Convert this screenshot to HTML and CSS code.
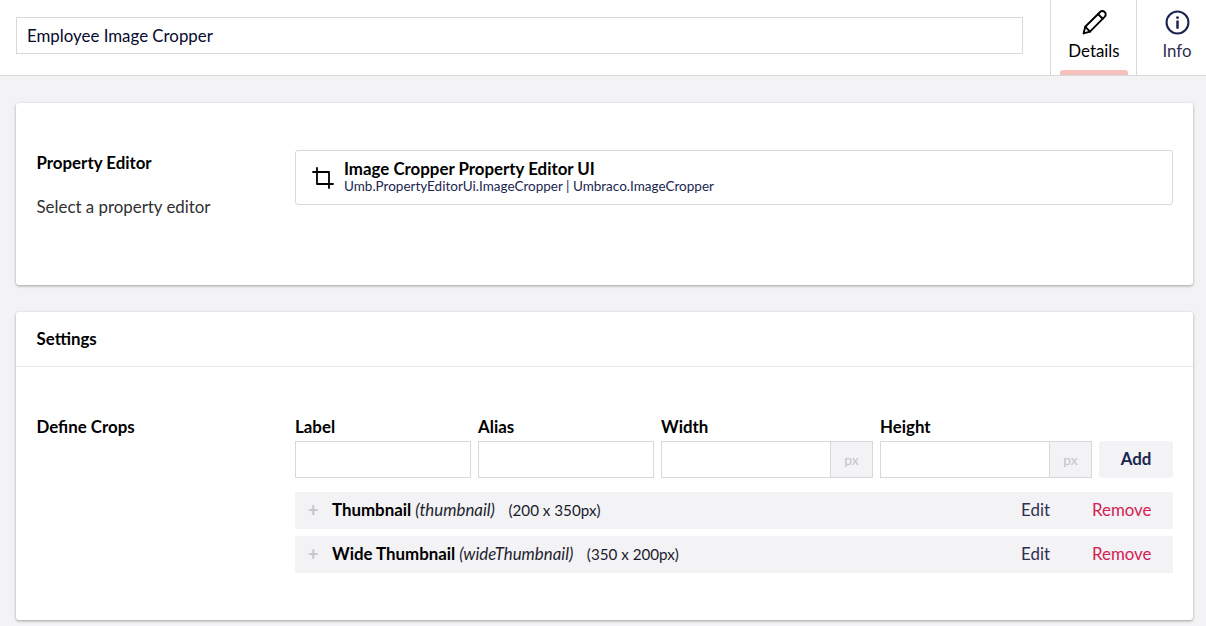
FILE: index.html
```html
<!DOCTYPE html>
<html lang="en">
<head>
    <meta charset="UTF-8">
    <title>Employee Image Cropper</title>
    <link rel="stylesheet" href="styles.css">
</head>
<body>
    <header class="top-bar">
        <div class="name-wrap">
            <input class="name-input" type="text" value="Employee Image Cropper">
        </div>
        <nav class="tabs">
            <a class="tab tab-details active" href="#">
                <svg class="tab-icon" viewBox="0 0 24 24" fill="none" stroke="currentColor" stroke-width="1.8" stroke-linecap="round" stroke-linejoin="round">
                    <path d="M1.5 22.5l1.6-6.4L17.4 1.9a2.9 2.9 0 0 1 4.3 0.1 2.9 2.9 0 0 1 0.2 4.3L7.7 20.8z"/>
                    <path d="M15.4 3.9l4.5 4.5"/>
                    <path d="M3.1 16.1l4.6 4.7"/>
                </svg>
                <span>Details</span>
            </a>
            <a class="tab tab-info" href="#">
                <svg class="tab-icon" viewBox="0 0 24 24" fill="none" stroke="currentColor" stroke-width="2" stroke-linecap="round">
                    <circle cx="12" cy="12" r="10.5"/>
                    <path d="M12 11v6" stroke-width="2.4"/>
                    <path d="M12 7.2v.2" stroke-width="2.6"/>
                </svg>
                <span>Info</span>
            </a>
        </nav>
    </header>

    <main class="content">
        <section class="card card-editor">
            <div class="field-label">
                <h4>Property Editor</h4>
                <p>Select a property editor</p>
            </div>
            <div class="editor-box">
                <svg class="crop-icon" viewBox="0 0 24 24" fill="none" stroke="currentColor" stroke-width="1.8" stroke-linecap="round" stroke-linejoin="round">
                    <path d="M6 2v16h16"/>
                    <path d="M2 6h16v16"/>
                </svg>
                <div class="editor-text">
                    <strong>Image Cropper Property Editor UI</strong>
                    <small>Umb.PropertyEditorUi.ImageCropper | Umbraco.ImageCropper</small>
                </div>
            </div>
        </section>

        <section class="card card-settings">
            <div class="card-head">Settings</div>
            <div class="card-body">
                <h4 class="crops-title">Define Crops</h4>
                <div class="crops">
                    <form class="crop-form">
                        <label class="crop-field">Label<input type="text"></label>
                        <label class="crop-field">Alias<input type="text"></label>
                        <label class="crop-field">Width
                            <span class="with-unit"><input type="text"><span class="unit">px</span></span>
                        </label>
                        <label class="crop-field">Height
                            <span class="with-unit"><input type="text"><span class="unit">px</span></span>
                        </label>
                        <button class="add-btn" type="button">Add</button>
                    </form>
                    <ul class="crop-list">
                        <li class="crop-row">
                            <span class="plus">+</span>
                            <b>Thumbnail</b>
                            <i>(thumbnail)</i>
                            <span class="size">(200 x 350px)</span>
                            <a class="edit" href="#">Edit</a>
                            <a class="remove" href="#">Remove</a>
                        </li>
                        <li class="crop-row">
                            <span class="plus">+</span>
                            <b>Wide Thumbnail</b>
                            <i>(wideThumbnail)</i>
                            <span class="size">(350 x 200px)</span>
                            <a class="edit" href="#">Edit</a>
                            <a class="remove" href="#">Remove</a>
                        </li>
                    </ul>
                </div>
            </div>
        </section>
    </main>
</body>
</html>
```

FILE: styles.css
```css
* {
    box-sizing: border-box;
}

html, body {
    height: 626px;
    overflow: hidden;
}

body {
    font-family: Lato, "Open Sans", sans-serif;
    font-size: 16.875px;
    margin: 0;
    background-color: #f3f3f5;
    color: #000;
}

h4, p, ul {
    margin: 0;
    padding: 0;
}

a {
    text-decoration: none;
}

.top-bar {
    display: flex;
    height: 76px;
    background-color: #fff;
    border-bottom: 1px solid #d8d7d9;
}

.name-wrap {
    flex: 1;
    padding: 17px 27px 0 16px;
}

.name-input {
    display: block;
    width: 100%;
    height: 37px;
    padding: 0 10px;
    font-family: inherit;
    font-size: 16.875px;
    color: #060b2e;
    border: 1px solid #d8d7d9;
    outline: none;
}

.tabs {
    display: flex;
}

.tab {
    position: relative;
    display: flex;
    flex-direction: column;
    align-items: center;
    padding-top: 10px;
    line-height: 20px;
    color: #303033;
    border-left: 1px solid #d8d7d9;
}

.tab-details {
    width: 86px;
    padding-left: 1px;
    color: #000;
}

.tab-info {
    width: 70px;
    padding-left: 11px;
    color: #303050;
}

.tab-icon {
    display: block;
    width: 25px;
    height: 25px;
    margin-bottom: 6px;
}

.tab-info .tab-icon {
    color: #1b264f;
}

.tab.active::after {
    content: "";
    position: absolute;
    left: 9px;
    bottom: 0;
    width: 68px;
    height: 5px;
    background-color: #f5c1bc;
    border-radius: 3px 3px 0 0;
}

.content {
    padding: 27px 13px 0 16px;
}

.card {
    background-color: #fff;
    border-radius: 3px;
    box-shadow: 0 1px 3px rgba(0, 0, 0, 0.35);
}

.card-editor {
    display: flex;
    height: 182px;
    padding: 47px 20px 0 20.5px;
    margin-bottom: 27px;
}

.field-label {
    width: 258.5px;
    flex: none;
}

h4 {
    font-size: 16.875px;
    font-weight: 700;
    line-height: 20px;
    margin-top: 3px;
}

.field-label p {
    margin-top: 24px;
    line-height: 20px;
    color: #303033;
}

.editor-box {
    flex: 1;
    display: flex;
    align-items: center;
    height: 55px;
    padding: 0 0 2px 15px;
    border: 1px solid #d8d7d9;
    border-radius: 3px;
}

.crop-icon {
    width: 24px;
    height: 24px;
    margin: 3px 9px 0 0;
    flex: none;
}

.editor-text strong {
    display: block;
    line-height: 18px;
    font-weight: 700;
}

.editor-text small {
    display: block;
    font-size: 13.5px;
    line-height: 16px;
    color: #1b264f;
}

.card-settings {
    height: 308px;
}

.card-head {
    height: 55px;
    padding: 17px 20.5px 0;
    font-weight: 700;
    line-height: 20px;
    border-bottom: 1px solid #e9e9eb;
}

.card-body {
    display: flex;
    padding: 47px 20px 0 20.5px;
}

.crops-title {
    width: 258.5px;
    flex: none;
    margin-top: 3px;
}

.crops {
    flex: 1;
    min-width: 0;
    padding-top: 3px;
}

.crop-form {
    display: flex;
    align-items: flex-end;
    gap: 7px;
}

.crop-field {
    display: block;
    font-weight: 700;
    line-height: 20px;
    width: 176px;
    flex: none;
}

.crop-field:nth-child(3),
.crop-field:nth-child(4) {
    width: 212px;
}

.crop-field input {
    display: block;
    width: 100%;
    height: 37px;
    margin-top: 4px;
    border: 1px solid #d8d7d9;
    outline: none;
}

.with-unit {
    display: flex;
}

.with-unit input {
    flex: 1;
    min-width: 0;
    border-right: none;
}

.unit {
    width: 43px;
    height: 37px;
    margin-top: 4px;
    font-size: 14px;
    font-weight: 400;
    line-height: 35px;
    text-align: center;
    color: #c4c4c8;
    background-color: #f3f3f5;
    border: 1px solid #d8d7d9;
}

.add-btn {
    flex: 1;
    height: 37px;
    padding-bottom: 3px;
    font-family: inherit;
    font-size: 16.875px;
    font-weight: 700;
    color: #1b264f;
    background-color: #f3f3f5;
    border: none;
    border-radius: 3px;
}

.crop-list {
    list-style: none;
    margin-top: 14px;
}

.crop-row {
    display: flex;
    align-items: center;
    height: 37px;
    margin-bottom: 7px;
    padding: 0 21.5px 2px 13px;
    color: #000;
    background-color: #f3f3f5;
}

.plus {
    width: 24px;
    font-size: 18px;
    font-weight: 700;
    color: #c4c4c8;
}

.crop-row b {
    font-weight: 700;
    margin-right: 4px;
}

.crop-row i {
    color: #1f1f2e;
    margin-right: 13.5px;
}

.size {
    font-size: 15.2px;
    color: #1b1b2e;
}

.edit {
    margin-left: auto;
    margin-top: -1px;
    color: #303050;
}

.remove {
    margin-left: 42px;
    margin-top: -1px;
    color: #d42054;
}
```
